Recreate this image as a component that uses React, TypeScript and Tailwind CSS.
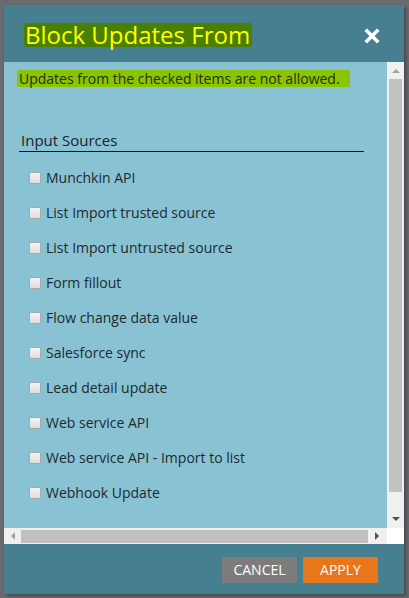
import React from "react";

const items = [
  "Munchkin API",
  "List Import trusted source",
  "List Import untrusted source",
  "Form fillout",
  "Flow change data value",
  "Salesforce sync",
  "Lead detail update",
  "Web service API",
  "Web service API - Import to list",
  "Webhook Update",
];

export default function App() {
  return (
    <div
      className="w-[409px] h-[598px] bg-[#6b6a70] pt-[5px] pl-[4px] overflow-hidden"
      style={{ fontFamily: '"Open Sans", "Liberation Sans", sans-serif' }}
    >
      <div className="w-[400px] h-[589px] flex flex-col shadow-[2px_2px_4px_rgba(0,0,0,0.35)]">
        {/* Header */}
        <div className="h-[57px] bg-[#467f8f] flex items-start justify-between shrink-0">
          <div className="mt-[18px] ml-[20px] bg-[#4b7f00] rounded-[3px] pl-px pr-[2px] h-[24px] flex items-center">
            <span className="text-[24px] leading-[24px] text-[#ffff00] whitespace-nowrap">Block Updates From</span>
          </div>
          <button className="mt-[23px] mr-[24px] w-[16px] h-[16px] flex items-center justify-center">
            <svg width="16" height="16" viewBox="0 0 16 16">
              <path d="M3 3 L13 13 M13 3 L3 13" stroke="#ffffff" strokeWidth="3.6" strokeLinecap="square" />
            </svg>
          </button>
        </div>

        {/* Body with vertical scrollbar */}
        <div className="h-[466px] flex shrink-0">
          <div className="w-[383px] bg-[#89c2d3] overflow-hidden">
            <div className="mt-[8px] ml-[13px] flex w-fit bg-[#8bc400] rounded-[2px] h-[17px] items-center pl-[2px] pr-[10px]">
              <span className="text-[14px] leading-[17px] text-[#22301a] whitespace-nowrap">
                Updates from the checked items are not allowed.
              </span>
            </div>
            <div className="mt-[42px] ml-[15px] w-[345px] border-b border-[#111] h-[23px]">
              <span className="block pl-[2px] text-[15px] leading-[22px] text-[#17232b]">Input Sources</span>
            </div>
            <div className="mt-[8px] flex flex-col">
              {items.map((t) => (
                <label key={t} className="h-[35px] flex items-center pl-[25px]">
                  <span className="w-[12px] h-[12px] rounded-[2px] border border-[#a9a9a9] bg-gradient-to-b from-[#f4f4f4] to-[#dedede] shrink-0" />
                  <span className="ml-[5px] text-[14px] leading-[17px] text-[#1c2a30] whitespace-nowrap">{t}</span>
                </label>
              ))}
            </div>
          </div>
          <div className="w-[17px] bg-[#f0f0f0] flex flex-col items-center">
            <div className="h-[17px] w-full flex items-center justify-center">
              <svg width="8" height="5" viewBox="0 0 8 5">
                <path d="M0 5 L4 1 L8 5 Z" fill="#a3a3a3" />
              </svg>
            </div>
            <div className="w-[13px] h-[413px] bg-[#c1c1c1]" />
            <div className="flex-1" />
            <div className="h-[17px] w-full flex items-center justify-center">
              <svg width="8" height="5" viewBox="0 0 8 5">
                <path d="M0 0 L8 0 L4 4 Z" fill="#505050" />
              </svg>
            </div>
          </div>
        </div>

        {/* Horizontal scrollbar */}
        <div className="h-[16px] flex shrink-0">
          <div className="w-[383px] bg-[#f0f0f0] flex items-center">
            <div className="w-[17px] h-full flex items-center justify-center">
              <svg width="5" height="8" viewBox="0 0 5 8">
                <path d="M5 0 L5 8 L1 4 Z" fill="#a3a3a3" />
              </svg>
            </div>
            <div className="w-[347px] h-[13px] bg-[#c1c1c1]" />
            <div className="flex-1 h-full flex items-center justify-center">
              <svg width="5" height="8" viewBox="0 0 5 8">
                <path d="M0 0 L4 4 L0 8 Z" fill="#505050" />
              </svg>
            </div>
          </div>
          <div className="w-[17px] bg-white" />
        </div>

        {/* Footer */}
        <div className="flex-1 bg-[#467f8f] flex justify-end items-start pt-[13px] pr-[26px] gap-[6px]">
          <button className="w-[75px] h-[26px] bg-[#7c7c7c] text-white text-[14px] leading-[26px] text-center">
            CANCEL
          </button>
          <button className="w-[75px] h-[26px] bg-[#e8761b] text-white text-[14px] leading-[26px] text-center">
            APPLY
          </button>
        </div>
      </div>
    </div>
  );
}
